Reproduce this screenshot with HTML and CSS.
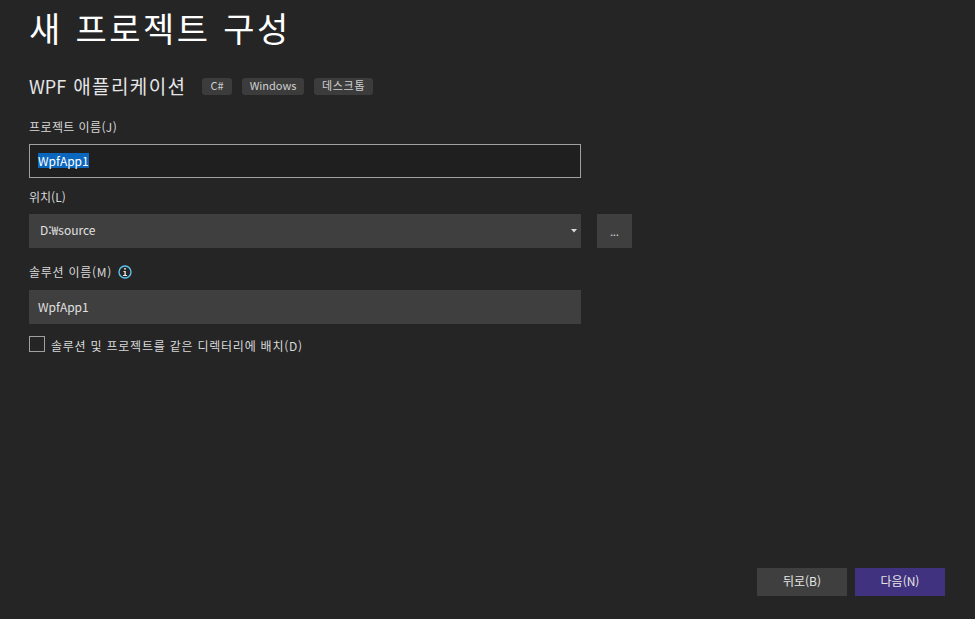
FILE: index.html
```html
<!DOCTYPE html>
<html lang="ko">
<head>
<meta charset="utf-8">
<title>새 프로젝트 구성</title>
<link rel="stylesheet" href="styles.css">
</head>
<body>
<main class="page">
  <h1 class="title">새 프로젝트 구성</h1>
  <div class="subtitle-row">
    <h2 class="subtitle">WPF <span class="subtitle-ko">애플리케이션</span></h2>
    <div class="tags">
      <span class="tag tag-short">C#</span>
      <span class="tag">Windows</span>
      <span class="tag tag-ko">데스크톱</span>
    </div>
  </div>
  <label class="label label-project">프로젝트 이름(J)</label>
  <div class="input input-focus"><span class="selected">WpfApp1</span></div>
  <label class="label label-location">위치(L)</label>
  <div class="location-row">
    <div class="input combo">
      <span>D:₩source</span>
      <svg class="caret" width="6" height="4" viewBox="0 0 6 4"><path d="M0 0H6L3 3.5Z" fill="#d8d8d8"/></svg>
    </div>
    <div class="browse">...</div>
  </div>
  <div class="label label-solution">
    <span>솔루션 이름(M)</span>
    <svg class="info" width="14" height="14" viewBox="0 0 14 14"><circle cx="7" cy="7" r="6" fill="none" stroke="#5cc2ee" stroke-width="1.4"/><rect x="6.2" y="3" width="1.6" height="1.6" fill="#e8e8e8"/><path d="M5.5 6H7.8V10H9V11H5V10H6.4V7H5.5Z" fill="#e8e8e8"/></svg>
  </div>
  <div class="input input-plain">WpfApp1</div>
  <div class="check-row">
    <span class="checkbox"></span>
    <span class="check-label">솔루션 및 프로젝트를 같은 디렉터리에 배치(D)</span>
  </div>
  <div class="spacer"></div>
  <div class="actions">
    <div class="btn">뒤로(B)</div>
    <div class="btn btn-primary">다음(N)</div>
  </div>
</main>
</body>
</html>
```
FILE: styles.css
```css
html, body {
  margin: 0;
  padding: 0;
  height: 100%;
  overflow: hidden;
  background: #252526;
}
body {
  font-family: "Noto Sans CJK KR", "Open Sans", sans-serif;
  color: #dcdcdc;
  font-size: 12px;
}
.page {
  box-sizing: border-box;
  height: 619px;
  padding: 0 30px 23px 29px;
  display: flex;
  flex-direction: column;
}
.title {
  margin: 0;
  height: 58px;
  font-size: 34px;
  font-weight: 400;
  line-height: 56px;
  color: #fff;
  letter-spacing: 2.4px;
  word-spacing: 1px;
}
.subtitle-row {
  display: flex;
  align-items: center;
  height: 24px;
  margin-top: 16px;
}
.subtitle {
  margin: 0;
  font-size: 18px;
  font-weight: 400;
  line-height: 24px;
  color: #e6e6e6;
  width: 173px;
  white-space: nowrap;
  word-spacing: 2px;
}
.subtitle-ko {
  font-size: 19px;
  letter-spacing: 1.4px;
}
.tags { display: flex; gap: 10px; }
.tag {
  height: 17px;
  line-height: 15px;
  padding: 0 7.5px;
  background: #3c3c3c;
  border-radius: 3px;
  font-size: 11px;
  color: #cfcfcf;
}
.tag-short { padding: 0 8.5px; }
.tag-ko { letter-spacing: 0.7px; padding: 0 8px; }
.label {
  height: 18px;
  line-height: 18px;
  font-size: 12px;
  color: #d8d8d8;
}
.label-project { margin-top: 20px; margin-bottom: 8px; letter-spacing: 0.4px; }
.label-location { margin-top: 10px; margin-bottom: 8px; }
.label-solution {
  margin-top: 15px;
  margin-bottom: 9px;
  display: flex;
  align-items: center;
  gap: 6px;
  letter-spacing: 0.75px;
}
.input {
  box-sizing: border-box;
  width: 552px;
  height: 34px;
  line-height: 34px;
  padding: 0 9px;
  background: #3f3f3f;
  color: #e0e0e0;
  font-size: 12px;
}
.input-plain { line-height: 33px; }
.input-focus {
  background: #1f1f1f;
  border: 1px solid #a0a0a0;
  line-height: 32px;
  padding: 0 8px;
}
.selected {
  display: inline-block;
  line-height: 15px;
  background: #0b66bd;
  color: #fff;
}
.location-row { display: flex; gap: 16px; }
.combo {
  display: flex;
  align-items: center;
  justify-content: space-between;
  padding: 0 4px 2px 11px;
}
.caret { margin-top: 2px; }
.browse {
  width: 35px;
  height: 34px;
  line-height: 36px;
  text-align: center;
  background: #3f3f3f;
  color: #e0e0e0;
  font-size: 10px;
}
.check-row {
  display: flex;
  align-items: center;
  gap: 6px;
  margin-top: 12px;
  height: 16px;
}
.checkbox {
  box-sizing: border-box;
  width: 16px;
  height: 16px;
  border: 1px solid #a0a0a0;
  background: #252526;
}
.check-label { font-size: 12px; color: #d8d8d8; letter-spacing: 0.77px; position: relative; top: 1px; }
.spacer { flex: 1; }
.actions {
  display: flex;
  justify-content: flex-end;
  gap: 8px;
}
.btn {
  width: 90px;
  height: 28px;
  line-height: 26px;
  text-align: center;
  background: #3f3f3f;
  color: #e6e6e6;
  font-size: 12px;
}
.btn-primary { background: #40327e; }
```
